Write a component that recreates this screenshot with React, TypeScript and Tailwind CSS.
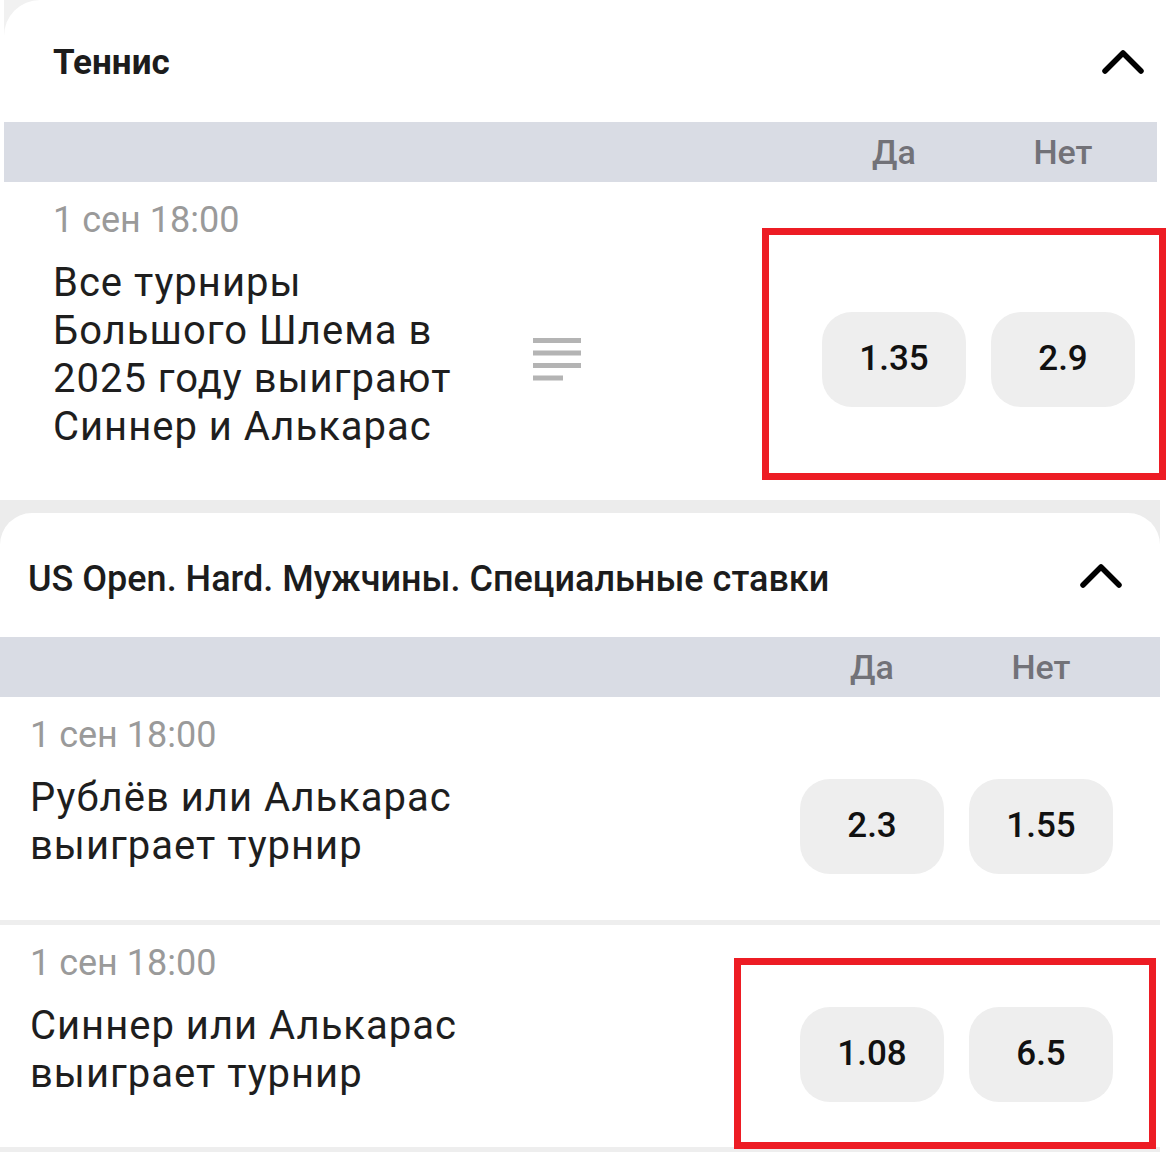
import React from "react";

const Chevron = () => (
  <svg width="42" height="26" viewBox="0 0 42 26" fill="none">
    <path d="M3 23 L21 5 L39 23" stroke="#000" strokeWidth="5.5" strokeLinecap="round" strokeLinejoin="round" />
  </svg>
);

const Lines = () => (
  <svg width="48" height="43" viewBox="0 0 48 43">
    <rect x="0" y="0" width="48" height="5" fill="#b4b4b4" />
    <rect x="0" y="12.5" width="48" height="5" fill="#b4b4b4" />
    <rect x="0" y="25" width="48" height="5" fill="#b4b4b4" />
    <rect x="0" y="37.5" width="30" height="5" fill="#b4b4b4" />
  </svg>
);

const Odd = ({ v }: { v: string }) => (
  <div className="flex h-[95px] w-[144px] items-center justify-center rounded-[30px] bg-[#eeeeee] text-[35px] font-medium text-[#111111]">
    {v}
  </div>
);

const Band = ({ pr }: { pr: string }) => (
  <div className={`flex h-[60px] items-center justify-end gap-[25px] bg-[#d9dce4] ${pr}`}>
    <span className="w-[144px] text-center text-[34px] font-medium text-[#727278]">Да</span>
    <span className="w-[144px] text-center text-[34px] font-medium text-[#727278]">Нет</span>
  </div>
);

export default function App() {
  return (
    <div className="relative h-[1165px] w-[1171px] overflow-hidden bg-white font-['Roboto','Noto_Sans',sans-serif]">
      {/* Card 1 */}
      <div className="ml-[4px] w-[1153px] bg-[#f1f1f1]">
        <div className="rounded-tl-[36px] bg-white">
          <div className="flex h-[122px] items-center justify-between pl-[49px] pr-[13px]">
            <span className="pt-[5px] text-[35px] font-bold text-[#1c1c1c]">Теннис</span>
            <Chevron />
          </div>
          <Band pr="pr-[22px]" />
          <div className="flex items-center pr-[22px]">
            <div className="w-[469px] pl-[49px] pt-[17px] pb-[49px]">
              <div className="text-[36px] leading-[42px] text-[#9a9a9a]">1 сен 18:00</div>
              <div className="mt-[18px] text-[40px] leading-[48px] tracking-[1px] text-[#1e1e1e]">
                Все турниры Большого Шлема в 2025 году выиграют Синнер и Алькарас
              </div>
            </div>
            <div className="ml-[60px] mt-[36px] flex">
              <Lines />
            </div>
            <div className="ml-auto mt-[36px] flex gap-[25px]">
              <Odd v="1.35" />
              <Odd v="2.9" />
            </div>
          </div>
        </div>
      </div>

      {/* Card 2 */}
      <div className="w-[1160px] bg-[#ececec] pt-[13px]">
        <div className="rounded-t-[32px] bg-white">
          <div className="flex h-[124px] items-center justify-between pl-[28px] pr-[38px]">
            <span className="pt-[8px] text-[36px] font-medium text-[#1c1c1c]">
              US Open. Hard. Мужчины. Специальные ставки
            </span>
            <Chevron />
          </div>
          <Band pr="pr-[47px]" />
          <div className="flex items-center pr-[47px]">
            <div className="pl-[30px] pt-[17px] pb-[50px]">
              <div className="text-[36px] leading-[42px] text-[#9a9a9a]">1 сен 18:00</div>
              <div className="mt-[18px] text-[40px] leading-[48px] tracking-[1px] text-[#1e1e1e]">
                Рублёв или Алькарас
                <br />
                выиграет турнир
              </div>
            </div>
            <div className="ml-auto mt-[36px] flex gap-[25px]">
              <Odd v="2.3" />
              <Odd v="1.55" />
            </div>
          </div>
          <div className="h-[5px] bg-[#eeeeee]" />
          <div className="flex items-center pr-[47px]">
            <div className="pl-[30px] pt-[17px] pb-[49px]">
              <div className="text-[36px] leading-[42px] text-[#9a9a9a]">1 сен 18:00</div>
              <div className="mt-[18px] text-[40px] leading-[48px] tracking-[1px] text-[#1e1e1e]">
                Синнер или Алькарас
                <br />
                выиграет турнир
              </div>
            </div>
            <div className="ml-auto mt-[36px] flex gap-[25px]">
              <Odd v="1.08" />
              <Odd v="6.5" />
            </div>
          </div>
          <div className="h-[5px] bg-[#eeeeee]" />
        </div>
      </div>

      {/* Red highlight boxes */}
      <div className="absolute left-[762px] top-[228px] h-[252px] w-[404px] border-[7px] border-[#ed1c24]" />
      <div className="absolute left-[734px] top-[958px] h-[191px] w-[422px] border-[7px] border-[#ed1c24]" />
    </div>
  );
}
